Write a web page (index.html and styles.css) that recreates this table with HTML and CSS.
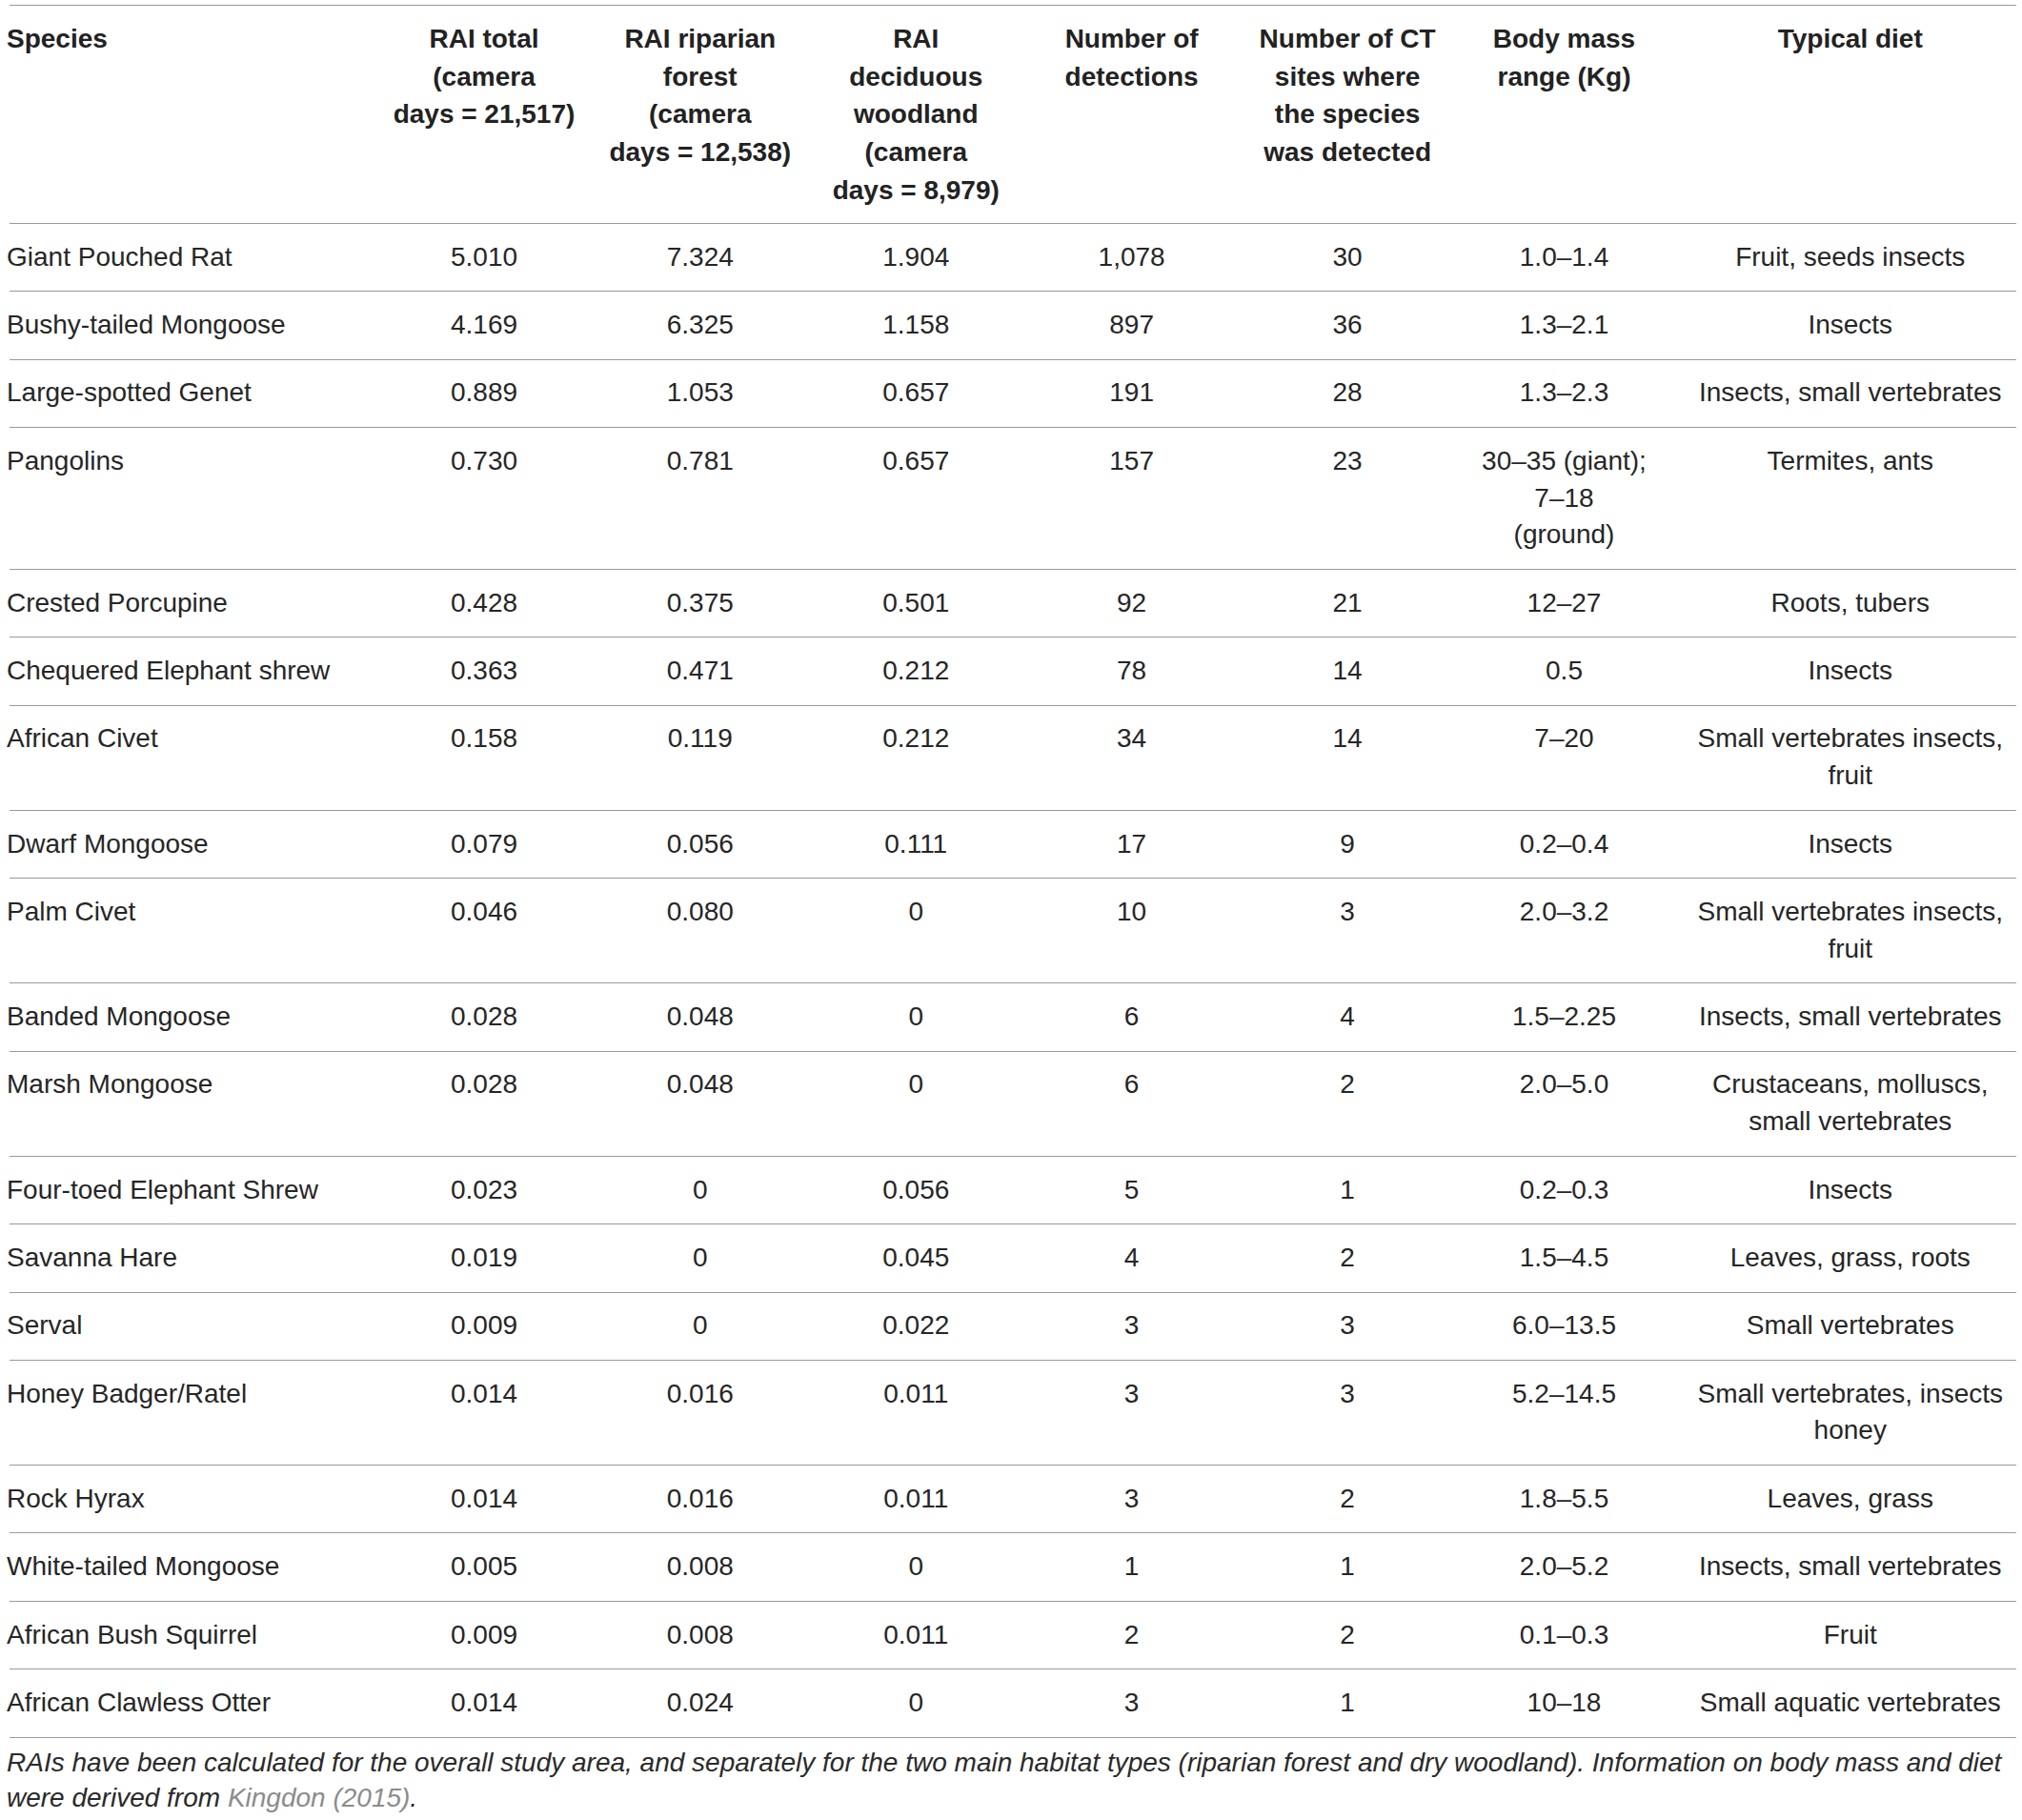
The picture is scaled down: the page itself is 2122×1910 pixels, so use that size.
FILE: index.html
```html
<!DOCTYPE html>
<html lang="en">
<head>
<meta charset="utf-8">
<title>Table</title>
<link rel="stylesheet" href="styles.css">
</head>
<body>
<div class="page">
<table class="data">
  <colgroup>
    <col class="c-species">
    <col class="c-rai">
    <col class="c-rai2">
    <col class="c-rai3">
    <col class="c-det">
    <col class="c-ct">
    <col class="c-mass">
    <col class="c-diet">
  </colgroup>
  <thead>
    <tr>
      <th class="species">Species</th>
      <th>RAI total<br>(camera<br>days = 21,517)</th>
      <th>RAI riparian<br>forest<br>(camera<br>days = 12,538)</th>
      <th>RAI<br>deciduous<br>woodland<br>(camera<br>days = 8,979)</th>
      <th>Number of<br>detections</th>
      <th>Number of CT<br>sites where<br>the species<br>was detected</th>
      <th>Body mass<br>range (Kg)</th>
      <th class="diet">Typical diet</th>
    </tr>
  </thead>
  <tbody>
    <tr><td class="species">Giant Pouched Rat</td><td>5.010</td><td>7.324</td><td>1.904</td><td>1,078</td><td>30</td><td>1.0–1.4</td><td class="diet">Fruit, seeds insects</td></tr>
    <tr><td class="species">Bushy-tailed Mongoose</td><td>4.169</td><td>6.325</td><td>1.158</td><td>897</td><td>36</td><td>1.3–2.1</td><td class="diet">Insects</td></tr>
    <tr><td class="species">Large-spotted Genet</td><td>0.889</td><td>1.053</td><td>0.657</td><td>191</td><td>28</td><td>1.3–2.3</td><td class="diet">Insects, small vertebrates</td></tr>
    <tr><td class="species">Pangolins</td><td>0.730</td><td>0.781</td><td>0.657</td><td>157</td><td>23</td><td>30–35 (giant);<br>7–18<br>(ground)</td><td class="diet">Termites, ants</td></tr>
    <tr><td class="species">Crested Porcupine</td><td>0.428</td><td>0.375</td><td>0.501</td><td>92</td><td>21</td><td>12–27</td><td class="diet">Roots, tubers</td></tr>
    <tr><td class="species">Chequered Elephant shrew</td><td>0.363</td><td>0.471</td><td>0.212</td><td>78</td><td>14</td><td>0.5</td><td class="diet">Insects</td></tr>
    <tr><td class="species">African Civet</td><td>0.158</td><td>0.119</td><td>0.212</td><td>34</td><td>14</td><td>7–20</td><td class="diet">Small vertebrates insects,<br>fruit</td></tr>
    <tr><td class="species">Dwarf Mongoose</td><td>0.079</td><td>0.056</td><td>0.111</td><td>17</td><td>9</td><td>0.2–0.4</td><td class="diet">Insects</td></tr>
    <tr><td class="species">Palm Civet</td><td>0.046</td><td>0.080</td><td>0</td><td>10</td><td>3</td><td>2.0–3.2</td><td class="diet">Small vertebrates insects,<br>fruit</td></tr>
    <tr><td class="species">Banded Mongoose</td><td>0.028</td><td>0.048</td><td>0</td><td>6</td><td>4</td><td>1.5–2.25</td><td class="diet">Insects, small vertebrates</td></tr>
    <tr><td class="species">Marsh Mongoose</td><td>0.028</td><td>0.048</td><td>0</td><td>6</td><td>2</td><td>2.0–5.0</td><td class="diet">Crustaceans, molluscs,<br>small vertebrates</td></tr>
    <tr><td class="species">Four-toed Elephant Shrew</td><td>0.023</td><td>0</td><td>0.056</td><td>5</td><td>1</td><td>0.2–0.3</td><td class="diet">Insects</td></tr>
    <tr><td class="species">Savanna Hare</td><td>0.019</td><td>0</td><td>0.045</td><td>4</td><td>2</td><td>1.5–4.5</td><td class="diet">Leaves, grass, roots</td></tr>
    <tr><td class="species">Serval</td><td>0.009</td><td>0</td><td>0.022</td><td>3</td><td>3</td><td>6.0–13.5</td><td class="diet">Small vertebrates</td></tr>
    <tr><td class="species">Honey Badger/Ratel</td><td>0.014</td><td>0.016</td><td>0.011</td><td>3</td><td>3</td><td>5.2–14.5</td><td class="diet">Small vertebrates, insects<br>honey</td></tr>
    <tr><td class="species">Rock Hyrax</td><td>0.014</td><td>0.016</td><td>0.011</td><td>3</td><td>2</td><td>1.8–5.5</td><td class="diet">Leaves, grass</td></tr>
    <tr><td class="species">White-tailed Mongoose</td><td>0.005</td><td>0.008</td><td>0</td><td>1</td><td>1</td><td>2.0–5.2</td><td class="diet">Insects, small vertebrates</td></tr>
    <tr><td class="species">African Bush Squirrel</td><td>0.009</td><td>0.008</td><td>0.011</td><td>2</td><td>2</td><td>0.1–0.3</td><td class="diet">Fruit</td></tr>
    <tr><td class="species">African Clawless Otter</td><td>0.014</td><td>0.024</td><td>0</td><td>3</td><td>1</td><td>10–18</td><td class="diet">Small aquatic vertebrates</td></tr>
  </tbody>
</table>
<p class="caption">RAIs have been calculated for the overall study area, and separately for the two main habitat types (riparian forest and dry woodland). Information on body mass and diet<br>were derived from <a class="ref" href="#">Kingdon (2015)</a>.</p>
</div>
</body>
</html>
```

FILE: styles.css
```css
html, body {
  margin: 0;
  padding: 0;
  background: #ffffff;
}

.page {
  padding: 5px 6px 0 10px;
  font-family: "Liberation Sans", Arial, sans-serif;
  color: #262626;
}

.data {
  width: 2106px;
  table-layout: fixed;
  border-collapse: collapse;
  border-top: 1px solid #9a9a9a;
  font-size: 28px;
  line-height: 38.7px;
}

.c-species { width: 384.5px; }
.c-rai { width: 227px; }
.c-rai2 { width: 226.5px; }
.c-rai3 { width: 226.5px; }
.c-det { width: 226.25px; }
.c-ct { width: 226.75px; }
.c-mass { width: 228px; }
.c-diet { width: 360.5px; }

.data th,
.data td {
  padding: 0;
  text-align: center;
  vertical-align: top;
  white-space: nowrap;
}

.data th {
  font-weight: bold;
  color: #222222;
  line-height: 39.7px;
  padding-top: 15px;
  padding-bottom: 14.5px;
}

.data td {
  font-weight: normal;
  padding-top: 15.7px;
  padding-bottom: 16px;
}

.data tr {
  border-bottom: 1px solid #9a9a9a;
}

.data .species {
  text-align: left;
  text-indent: -3px;
}

.data .diet {
  padding-left: 12px;
}

.caption {
  margin: 7px 0 0 -3px;
  font-size: 28px;
  line-height: 37.5px;
  font-style: italic;
  color: #2a2a2a;
  white-space: nowrap;
}

.ref {
  color: #8c8c8c;
  text-decoration: none;
}
```
